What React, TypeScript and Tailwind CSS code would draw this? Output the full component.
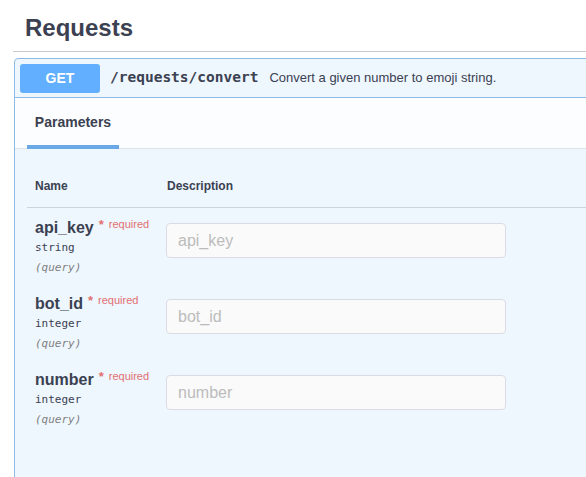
const params = [
  { name: 'api_key', type: 'string' },
  { name: 'bot_id', type: 'integer' },
  { name: 'number', type: 'integer' },
];

const sans = "font-['Liberation_Sans',Arial,sans-serif]";
const mono = "font-['DejaVu_Sans_Mono',monospace]";

function ParamRow({ name, type }: { name: string; type: string }) {
  return (
    <div className="flex h-[76px] pt-[9px]">
      <div className="w-[139px] pl-2">
        <div className={`${sans} text-[16px] leading-[21px] font-semibold text-[#3b4151] flex items-start`}>
          <span>{name}</span>
          <span className="ml-[5px] text-[13px] leading-[16px] text-[#e27070] font-bold">*</span>
          <span className="ml-[5px] text-[11px] leading-[14px] text-[#e27070] font-normal">required</span>
        </div>
        <div className={`${mono} text-[11px] leading-[20px] text-[#3b4151]`}>{type}</div>
        <div className={`${mono} text-[11px] leading-[20px] italic text-[#808080]`}>(query)</div>
      </div>
      <div className="pt-[6px]">
        <input
          placeholder={name}
          className={`${sans} w-[340px] h-[35px] rounded-[4px] border border-[#d9dde3] bg-[#fafafa] px-[11px] text-[16px] text-[#3b4151] placeholder:text-[#bcbcbc] outline-none`}
        />
      </div>
    </div>
  );
}

export default function App() {
  return (
    <div className="w-[586px] h-[477px] overflow-hidden bg-white pl-[13px]">
      <h2 className={`${sans} pl-3 pt-[12px] pb-[7px] text-[24px] leading-[32px] font-bold text-[#3b4151] border-b border-[#c9cbd0]`}>
        Requests
      </h2>

      <div className="mt-[6px] ml-px w-[600px] h-[500px] rounded-l-[4px] border border-[#8dbbe6] bg-[#eef6fe]">
        {/* summary */}
        <div className="flex items-center h-[39px] px-[5px] border-b border-[#8dbbe6]">
          <div className={`${sans} w-[80px] h-[29px] rounded-[3px] bg-[#61affe] text-white text-[14px] font-bold flex items-center justify-center`}>
            GET
          </div>
          <span className={`${mono} ml-[10px] text-[14.5px] font-bold text-[#3b4151]`}>/requests/convert</span>
          <span className={`${sans} ml-[11px] text-[13px] text-[#3b4151]`}>Convert a given number to emoji string.</span>
        </div>

        {/* section header */}
        <div className="h-[51px] bg-[#fbfdff] border-b border-[#dce3ea] pl-3">
          <div className="w-[92px] h-[47px] flex items-center justify-center">
            <span className={`${sans} text-[14px] font-bold text-[#3b4151] pt-[1px]`}>Parameters</span>
          </div>
          <div className="w-[92px] h-[4px] bg-[#6aa9e6]" />
        </div>

        {/* table */}
        <div className="pl-3">
          <div className={`${sans} flex pt-[29px] pb-[13px] border-b border-[#cdd4dc] text-[12px] leading-[16px] font-bold text-[#3b4151]`}>
            <div className="w-[139px] pl-2">Name</div>
            <div className="pl-px">Description</div>
          </div>
          {params.map((p) => (
            <ParamRow key={p.name} name={p.name} type={p.type} />
          ))}
        </div>
      </div>
    </div>
  );
}
